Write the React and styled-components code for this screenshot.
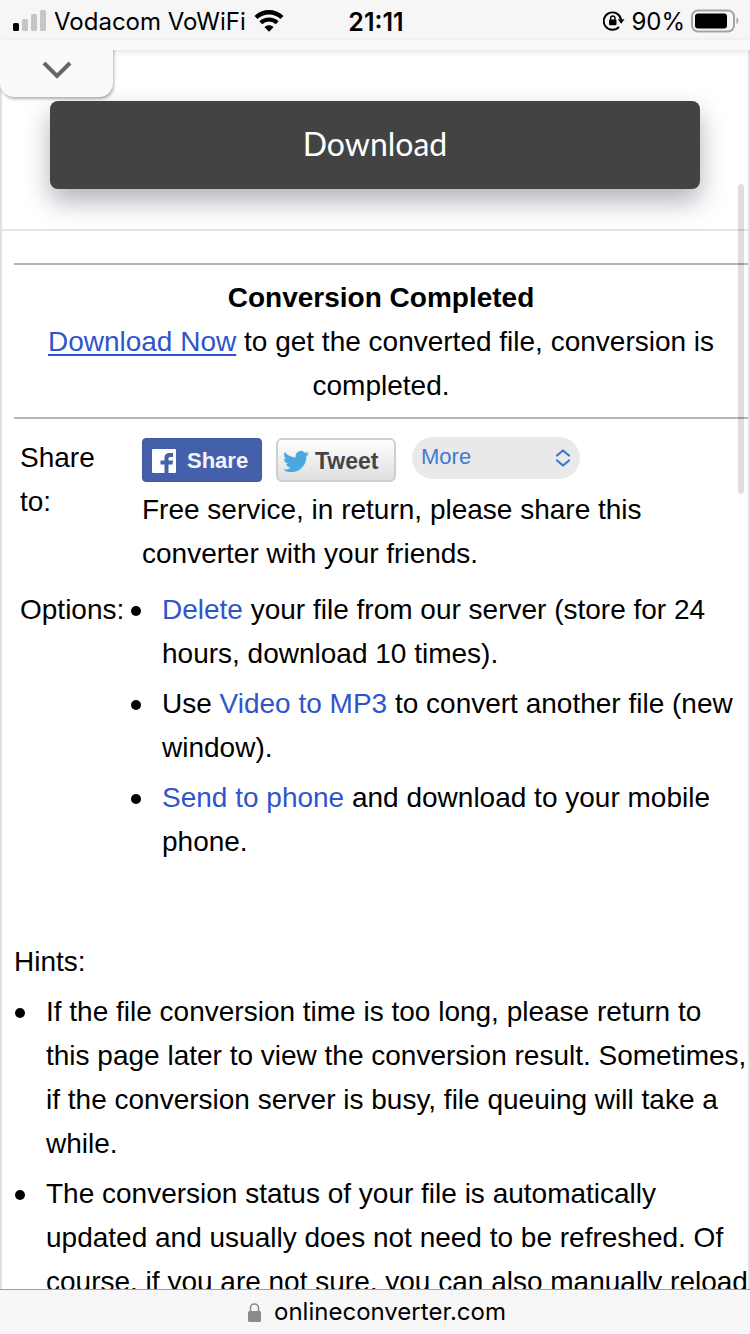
import React from 'react'
import styled, { createGlobalStyle, css } from 'styled-components'

const GlobalStyle = createGlobalStyle`
  * {
    box-sizing: border-box;
  }
  body {
    margin: 0;
    background: #fff;
    color: #000;
    font-family: "Liberation Sans", Arial, sans-serif;
    font-size: 28px;
    line-height: 44px;
  }
`

const Screen = styled.div`
  display: flex;
  flex-direction: column;
  height: 100vh;
  overflow: hidden;
`

const StatusBar = styled.header`
  display: grid;
  grid-template-columns: 1fr auto 1fr;
  align-items: center;
  flex: none;
  height: 40px;
  padding: 0 11px 0 13px;
  background: #f6f6f6;
  font-family: Inter, sans-serif;
  font-size: 24px;
  line-height: 40px;

  span {
    padding-top: 2px;
  }
`

const StatusGroup = styled.div`
  display: flex;
  align-items: center;
  justify-content: ${props => props.$end ? 'flex-end' : 'flex-start'};
  gap: ${props => props.$end ? '6px' : '8px'};
`

const Clock = styled.div`
  padding-top: 2px;
  font-size: 25px;
  font-weight: 600;
`

const Toolbar = styled.div`
  position: relative;
  z-index: 1;
  flex: none;
  height: 10px;
  background: #fafafa;
  box-shadow: 0 2px 6px rgba(0, 0, 0, 0.12);
`

const CollapseButton = styled.button`
  position: absolute;
  top: 0;
  left: 0;
  display: flex;
  align-items: center;
  justify-content: center;
  width: 113px;
  height: 57px;
  padding: 2px 0 0;
  border: 0;
  border-radius: 0 0 14px 14px;
  background: #fafafa;
  box-shadow: 1px 2px 3px rgba(0, 0, 0, 0.3);
  clip-path: inset(10px -8px -8px 0);
`

const Page = styled.main`
  position: relative;
  flex: 1;
  min-height: 0;
  overflow: hidden;
  border: solid #e0e0e0;
  border-width: 0 2px;
`

const DownloadArea = styled.div`
  padding: 51px 48px 40px;
  border-bottom: 2px solid #e4e4e4;
`

const DownloadButton = styled.button`
  display: block;
  width: 100%;
  height: 88px;
  padding: 0 0 4px;
  border: 0;
  border-radius: 8px;
  background: #434343;
  box-shadow: 0 12px 26px rgba(40, 40, 65, 0.36);
  color: #fff;
  font-family: Lato, sans-serif;
  font-size: 32px;
`

const Content = styled.div`
  padding: 32px 0 0 12px;
`

const Result = styled.section`
  padding: 11px 0 9px;
  border: solid #b5b5b5;
  border-width: 2px 0;
  text-align: center;
`

const Title = styled.h1`
  margin: 0;
  font-size: 28px;
`

const Text = styled.p`
  margin: 0;
`

const Link = styled.a`
  color: #2f55cc;
  text-decoration: ${props => props.$underline ? 'underline' : 'none'};
  text-decoration-thickness: 2px;
  text-underline-offset: 3px;
`

const Row = styled.section`
  display: flex;
  padding: 0 0 12px 6px;
`

const RowLabel = styled.div`
  flex: none;
  width: 122px;
  padding-right: ${props => props.$narrow ? '40px' : '0'};
`

const RowBody = styled.div`
  flex: 1;
`

const Rows = styled.div`
  padding: 17px 0 58px;
`

const ShareBar = styled.div`
  display: flex;
  align-items: flex-start;
  margin: 2px 0 6px;
`

const ShareButton = styled.button`
  display: flex;
  align-items: center;
  gap: 11px;
  width: 120px;
  height: 44px;
  margin-right: 14px;
  padding: 2px 0 0 9px;
  border: 1px solid #3f5a9f;
  border-radius: 4px;
  background: #4560ab;
  color: #f2f4fa;
  font: bold 22px "Liberation Sans", Arial, sans-serif;

  ${props => props.$light && css`
    gap: 6px;
    margin-right: 16px;
    padding-left: 5px;
    border: 2px solid #cfcfcf;
    border-radius: 6px;
    background: linear-gradient(#fff, #dedede);
    color: #444;
    font-size: 23px;
  `}
`

const MoreSelect = styled.div`
  display: flex;
  position: relative;
  height: 42px;
  width: 168px;
  margin-top: -1px;

  select {
    width: 100%;
    padding: 0 9px 3px;
    border: 0;
    border-radius: 21px;
    background: #e9e9e9;
    color: #3d7bd2;
    font: 22px "Liberation Sans", Arial, sans-serif;
    appearance: none;
  }

  svg {
    position: absolute;
    top: 12px;
    right: 9px;
    pointer-events: none;
  }
`

const List = styled.ul`
  margin: 0;
  padding: 0 0 0 ${props => props.$indent};
  list-style: none;
`

const Item = styled.li`
  position: relative;
  margin-bottom: 6px;

  &::before {
    content: "";
    position: absolute;
    top: 18px;
    left: -31px;
    width: 10px;
    height: 10px;
    border-radius: 50%;
    background: #000;
  }
`

const Hints = styled.section`
  ${Text} {
    margin-bottom: 6px;
  }
`

const ScrollThumb = styled.div`
  position: absolute;
  top: 134px;
  right: 4px;
  width: 6px;
  height: 310px;
  border-radius: 3px;
  background: rgba(0, 0, 0, 0.13);
`

const AddressBar = styled.footer`
  display: flex;
  align-items: center;
  justify-content: center;
  gap: 13px;
  flex: none;
  height: 45px;
  padding-left: 4px;
  border-top: 1px solid #a0a0a0;
  background: #f7f7f7;
  font-family: Inter, sans-serif;
  font-size: 24px;
`

const SignalIcon = () => (
  <svg width="33" height="22" viewBox="0 0 33 22">
    <rect x="0" y="13" width="6" height="8" rx="1.5" />
    <g fill="#c6c6c6">
      <rect x="9" y="9" width="6" height="12" rx="1.5" />
      <rect x="18" y="4" width="6" height="17" rx="1.5" />
      <rect x="27" y="0" width="6" height="21" rx="1.5" />
    </g>
  </svg>
)

const WifiIcon = () => (
  <svg width="30" height="22" viewBox="0 0 30 22">
    <path d="M2 7.500C9.500 0.500 20.500 0.500 28 7.500" fill="none" stroke="#000" strokeWidth="4.400" />
    <path d="M6.800 12.700C11.500 8.400 18.500 8.400 23.200 12.700" fill="none" stroke="#000" strokeWidth="4.200" />
    <path d="M10.500 17.200C13 14.600 17 14.600 19.500 17.200L15 21.700Z" />
  </svg>
)

const RotationLockIcon = () => (
  <svg width="22" height="20" viewBox="0 0 22 20">
    <path d="M18 8.500A8.700 8.700 0 1 0 16 15.800" fill="none" stroke="#000" strokeWidth="1.900" />
    <path d="M14.800 8.200H21.600L18.200 12.800Z" />
    <rect x="6" y="8.500" width="7.500" height="5.800" rx="1" />
    <path d="M7.600 9V7.200a2.200 2.200 0 0 1 4.400 0V9" fill="none" stroke="#000" strokeWidth="1.400" />
  </svg>
)

const BatteryIcon = () => (
  <svg width="48" height="24" viewBox="0 0 48 24">
    <rect x="1" y="1.500" width="42" height="21" rx="6" fill="none" stroke="#a3a3a3" strokeWidth="2" />
    <rect x="4" y="4.500" width="32" height="15" rx="3" />
    <path d="M45.500 8.500c2.500 1 2.500 5.500 0 6.500Z" fill="#a3a3a3" />
  </svg>
)

const ChevronIcon = () => (
  <svg width="30" height="18" viewBox="0 0 30 18">
    <path d="M2 2L15 15L28 2" fill="none" stroke="#666" strokeWidth="4" />
  </svg>
)

const FacebookIcon = () => (
  <svg width="24" height="24" viewBox="0 0 24 24">
    <rect width="24" height="24" rx="1" fill="#fff" />
    <path d="M12.500 24V15.500H8.500V11.500H12.500V9C12.500 5.500 14.500 4 17.500 4H21V8H18.500C17 8 16.500 8.500 16.500 9.700V11.500H21L20.500 15.500H16.500V24Z" fill="#4560ab" />
  </svg>
)

const TwitterIcon = () => (
  <svg width="26" height="22" viewBox="0 1.500 24 20">
    <path fill="#4aa8e0" d="M23.953 4.570a10 10 0 0 1-2.825.775 4.958 4.958 0 0 0 2.163-2.723c-.951.555-2.005.959-3.127 1.184a4.920 4.920 0 0 0-8.384 4.482C7.690 8.095 4.067 6.130 1.640 3.162a4.822 4.822 0 0 0-.666 2.475c0 1.710.870 3.213 2.188 4.096a4.904 4.904 0 0 1-2.228-.616v.060a4.923 4.923 0 0 0 3.946 4.827 4.996 4.996 0 0 1-2.212.085 4.936 4.936 0 0 0 4.604 3.417 9.867 9.867 0 0 1-6.102 2.105c-.390 0-.779-.023-1.170-.067a13.995 13.995 0 0 0 7.557 2.209c9.053 0 13.998-7.496 13.998-13.985 0-.210 0-.420-.015-.630A9.935 9.935 0 0 0 24 4.590z" />
  </svg>
)

const SelectIcon = () => (
  <svg width="16" height="18" viewBox="0 0 16 18">
    <path d="M2 6.500L8 1.500L14 6.500M2 11.500L8 16.500L14 11.500" fill="none" stroke="#3a76d0" strokeWidth="2.200" strokeLinecap="round" strokeLinejoin="round" />
  </svg>
)

const LockIcon = () => (
  <svg width="13" height="19" viewBox="0 0 13 19">
    <rect x="0" y="8" width="13" height="11" rx="1.500" fill="#8b8b8b" />
    <path d="M2.500 9V5a4 4 0 0 1 8 0V9" fill="none" stroke="#8b8b8b" strokeWidth="1.600" />
  </svg>
)

const App = () => (
  <Screen>
    <GlobalStyle />
    <StatusBar>
      <StatusGroup>
        <SignalIcon />
        <span>Vodacom VoWiFi</span>
        <WifiIcon />
      </StatusGroup>
      <Clock>21:11</Clock>
      <StatusGroup $end>
        <RotationLockIcon />
        <span>90%</span>
        <BatteryIcon />
      </StatusGroup>
    </StatusBar>
    <Toolbar>
      <CollapseButton aria-label="Show toolbar">
        <ChevronIcon />
      </CollapseButton>
    </Toolbar>
    <Page>
      <DownloadArea>
        <DownloadButton>Download</DownloadButton>
      </DownloadArea>
      <Content>
        <Result>
          <Title>Conversion Completed</Title>
          <Text>
            <Link href="#download" $underline>Download Now</Link> to get the converted file, conversion is completed.
          </Text>
        </Result>
        <Rows>
          <Row>
            <RowLabel $narrow>Share to:</RowLabel>
            <RowBody>
              <ShareBar>
                <ShareButton><FacebookIcon />Share</ShareButton>
                <ShareButton $light><TwitterIcon />Tweet</ShareButton>
                <MoreSelect>
                  <select aria-label="More">
                    <option>More</option>
                  </select>
                  <SelectIcon />
                </MoreSelect>
              </ShareBar>
              <Text>Free service, in return, please share this converter with your friends.</Text>
            </RowBody>
          </Row>
          <Row>
            <RowLabel>Options:</RowLabel>
            <RowBody>
              <List $indent="20px">
                <Item><Link href="#delete">Delete</Link> your file from our server (store for 24 hours, download 10 times).</Item>
                <Item>Use <Link href="#mp3">Video to MP3</Link> to convert another file (new window).</Item>
                <Item><Link href="#phone">Send to phone</Link> and download to your mobile phone.</Item>
              </List>
            </RowBody>
          </Row>
        </Rows>
        <Hints>
          <Text>Hints:</Text>
          <List $indent="32px">
            <Item>If the file conversion time is too long, please return to this page later to view the conversion result. Sometimes, if the conversion server is busy, file queuing will take a while.</Item>
            <Item>The conversion status of your file is automatically updated and usually does not need to be refreshed. Of course, if you are not sure, you can also manually reload</Item>
          </List>
        </Hints>
      </Content>
      <ScrollThumb />
    </Page>
    <AddressBar>
      <LockIcon />
      <span>onlineconverter.com</span>
    </AddressBar>
  </Screen>
)

export default App
